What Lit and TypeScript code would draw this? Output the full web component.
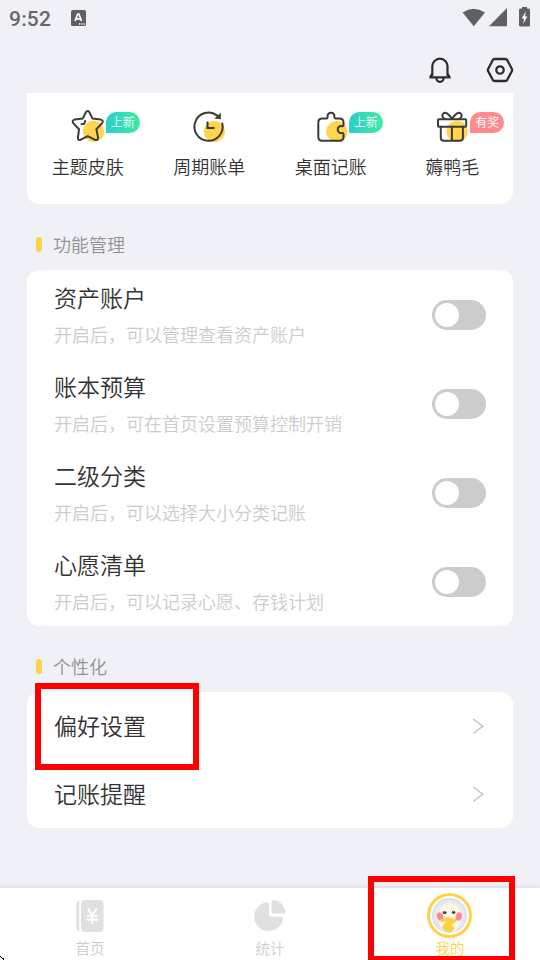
import { LitElement, html, css, svg } from "lit";
import { customElement, property } from "lit/decorators.js";

const FEATURES = [
  { icon: "star", label: "主题皮肤", badge: "上新", tone: "green" },
  { icon: "clock", label: "周期账单", badge: "", tone: "" },
  { icon: "puzzle", label: "桌面记账", badge: "上新", tone: "green" },
  { icon: "gift", label: "薅鸭毛", badge: "有奖", tone: "pink" },
];

const SWITCHES = [
  { title: "资产账户", note: "开启后，可以管理查看资产账户" },
  { title: "账本预算", note: "开启后，可在首页设置预算控制开销" },
  { title: "二级分类", note: "开启后，可以选择大小分类记账" },
  { title: "心愿清单", note: "开启后，可以记录心愿、存钱计划" },
];

const SHAPES: Record<string, unknown> = {
  star: svg`<circle cx="23.6" cy="23.4" r="10.6" fill="#ffd54d"/>
    <path d="M15.7 4.6Q17.7 1.3 19.6 4.6L22.4 10.4L30.6 11.6Q34.3 12.5 31.9 15.4L26.4 21.2L28 29.4Q28.2 33 24.8 31.7L17.7 28.2L10.8 31.7Q7.6 33 8 29.4L9 21.2L3.5 15.4Q1.3 12.5 4.7 11.6L12.9 10.4Z"/>
    <path d="M11.6 16.2l2.6-.4M14.6 14.8l.6-1.8"/>`,
  clock: svg`<circle cx="23.4" cy="23.6" r="10.6" fill="#ffd54d"/>
    <path d="M31.3 15.5A14.1 14.1 0 1 1 26.3 7.6"/>
    <path d="M16.5 13.4V20H23.6" stroke-linecap="butt" stroke-linejoin="miter"/>
    <path d="M29.8 4.8V11.2L23.4 10.4Z" fill="#3b3b3b" stroke="none"/>`,
  puzzle: svg`<circle cx="23.9" cy="23.5" r="10.6" fill="#ffd54d"/>
    <path d="M9.3 10.4H13.4Q14.8 10.3 14.6 8.6C13.8 3.4 22.2 3.4 21.4 8.6Q21.2 10.3 22.6 10.4H26.4Q30.5 10.4 30.5 14.4V17.2Q30.3 18.6 28.7 18.1C23.4 17.6 23.4 25.6 28.7 25Q30.3 24.7 30.5 26.2V29Q30.5 32.8 26.4 32.8H9.3Q5.3 32.8 5.3 29V14.4Q5.3 10.4 9.3 10.4Z"/>`,
  gift: svg`<circle cx="23.1" cy="23.4" r="10.6" fill="#ffd54d"/>
    <rect x="4" y="11.2" width="28.2" height="7.6" rx=".8"/>
    <path d="M6.8 18.8V29.8Q6.8 32.8 9.8 32.8H25.8Q28.9 32.8 28.9 29.8V18.8M17.9 18.8V32.8"/>
    <path d="M18 10.8C14.8 5.8 11.5 3.6 9.3 5.4C7.2 7.2 8.6 9.8 10.6 10.8M18 10.8C21.2 5.8 24.5 3.6 26.7 5.4C28.8 7.2 27.4 9.8 25.4 10.8"/>`,
};

@customElement("feature-item")
export class FeatureItem extends LitElement {
  @property() icon = "star";
  @property() label = "";
  @property() badge = "";
  @property() tone = "";

  static styles = css`
    :host { display: flex; flex: 1; flex-direction: column; align-items: center; padding-top: 15px; }
    .art { position: relative; width: 36px; height: 36px; }
    svg { display: block; fill: none; stroke: #3b3b3b; stroke-width: 2; stroke-linecap: round; stroke-linejoin: round; }
    svg circle { stroke: none; }
    .badge {
      position: absolute; left: 36px; top: 4px; width: 34px; height: 21px;
      border-radius: 11px 11px 11px 0; color: #fff; font-size: 12px; line-height: 20px; text-align: center;
    }
    .green { background: linear-gradient(90deg, #2bcfc9, #3eeaa2); }
    .pink { background: #ff8a8c; }
    .label { margin-top: 9px; font-size: 18px; line-height: 26px; color: #333; white-space: nowrap; }
  `;

  render() {
    return html`
      <div class="art">
        <svg width="36" height="36" viewBox="0 0 36 36">${SHAPES[this.icon]}</svg>
        ${this.badge ? html`<span class="badge ${this.tone}">${this.badge}</span>` : ""}
      </div>
      <div class="label">${this.label}</div>
    `;
  }
}

@customElement("app-root")
export class AppRoot extends LitElement {
  static styles = css`
    :host {
      display: flex; flex-direction: column; position: relative; box-sizing: border-box;
      width: 540px; height: 960px; overflow: hidden; background: #f0f1f6;
      font-family: "Noto Sans CJK SC DemiLight", "Noto Sans CJK SC", sans-serif; font-weight: 350; color: #333;
    }
    svg { display: block; }
    .status { display: flex; align-items: center; height: 38px; padding: 0 9px 2px; box-sizing: border-box; }
    .time { padding-top: 1px; font: 500 21px/38px Roboto, sans-serif; color: #66676a; width: 62px; letter-spacing: .2px; }
    .signals { margin-left: auto; }
    .tools { display: flex; justify-content: flex-end; align-items: center; gap: 35px; height: 55px; padding: 8px 26.5px 0; box-sizing: border-box; }
    .card { margin: 0 27px; background: #fff; border-radius: 12px; }
    .features { display: flex; height: 111px; border-radius: 0 0 12px 12px; }
    .heading { display: flex; align-items: center; gap: 11px; height: 66px; padding: 14px 36px 0; box-sizing: border-box; font-size: 18px; line-height: 26px; color: #929292; }
    .heading::before { content: ""; width: 6px; height: 15px; border-radius: 3px; background: #ffd24b; }
    .row { display: flex; align-items: center; justify-content: space-between; height: 89px; padding: 1px 27px 0; box-sizing: border-box; }
    .title { font-size: 23px; line-height: 34px; }
    .row .title { margin-top: -1px; }
    .note { margin-top: 5px; font-size: 18px; line-height: 30px; color: #ccc; }
    .switch { display: flex; align-items: center; width: 54px; height: 30px; padding: 0 3px; border-radius: 15px; background: #ccc; box-sizing: border-box; }
    .knob { width: 24px; height: 24px; border-radius: 50%; background: #fff; }
    .link { display: flex; align-items: center; justify-content: space-between; height: 68px; padding: 0 28px 0 27px; box-sizing: border-box; }
    .link .title { padding-bottom: 2px; }
    .tabs { display: flex; height: 72px; margin-top: auto; background: #fff; box-shadow: 0 -1px 4px rgba(0, 0, 0, .09); }
    .tab { display: flex; flex: 1; flex-direction: column; align-items: center; justify-content: flex-end; padding-bottom: 1px; box-sizing: border-box; font-size: 14.5px; line-height: 22px; color: #ccc; }
    .tab svg { margin-bottom: 5px; }
    .tab.active { color: #ffd24b; }
    .tab.active svg { margin-bottom: -2px; }
    .mark { position: absolute; box-sizing: border-box; border: 6px solid #f00; }
    .mark-link { left: 35px; top: 683px; width: 164px; height: 87px; }
    .mark-tab { left: 368px; top: 876px; width: 147px; height: 86px; }
    .pointer { position: absolute; left: 0; bottom: 0; }
  `;

  render() {
    return html`
      <div class="status">
        <span class="time">9:52</span>
        <svg width="16" height="18" viewBox="0 0 16 18">
          <rect y="1" width="15" height="16" rx="1.5" fill="#5f6062"/>
          <path d="M4 12L6.7 5h1.2l2.6 7M5.2 9.9h4.2" fill="none" stroke="#fff" stroke-width="1.7"/>
          <path d="M8 15h1.3M10.3 15h1.3M12.6 15h1.3" stroke="#fff" stroke-width="1.3"/>
        </svg>
        <svg class="signals" width="70" height="24" viewBox="0 0 70 24" fill="#5f6062">
          <path d="M1.6 6.4Q12.7-1 24 6.4L12.8 20.2Z"/>
          <path d="M28 20.3L46 2V20.3Z"/>
          <path d="M61 1h5v1.5h1.5q1.5 0 1.5 1.5v15q0 1.5-1.5 1.5h-8q-1.5 0-1.5-1.5V4q0-1.5 1.5-1.5H61Z"/>
          <path d="M64.8 5.5L60.6 12.5h2.5l-1 5.5L66.4 10.6h-2.3Z" fill="#fff"/>
        </svg>
      </div>
      <div class="tools">
        <svg width="22" height="28" viewBox="0 0 22 28" fill="none" stroke="#2c2c2c" stroke-width="2.2" stroke-linejoin="round">
          <path d="M3.3 20V10.3a7.6 7.6 0 0 1 15.2 0V20M1.4 20.8L3.3 17.5M20.4 20.8L18.5 17.5M.4 21.3H21.6M7.4 22.3a3.6 3.6 0 0 0 7.2 0"/>
        </svg>
        <svg width="28" height="28" viewBox="0 0 28 28" fill="none" stroke="#2c2c2c" stroke-width="2.3" stroke-linejoin="round">
          <path d="M8.8 3H19.2Q20.6 3 21.3 4.2L25.8 12.7Q26.4 14 25.8 15.3L21.3 23.8Q20.6 25 19.2 25H8.8Q7.4 25 6.7 23.8L2.2 15.3Q1.6 14 2.2 12.7L6.7 4.2Q7.4 3 8.8 3Z"/>
          <circle cx="14" cy="14" r="3.7"/>
        </svg>
      </div>
      <div class="card features">
        ${FEATURES.map((f) => html`<feature-item .icon=${f.icon} .label=${f.label} .badge=${f.badge} .tone=${f.tone}></feature-item>`)}
      </div>
      <div class="heading">功能管理</div>
      <div class="card">
        ${SWITCHES.map((s) => html`
          <div class="row">
            <div><div class="title">${s.title}</div><div class="note">${s.note}</div></div>
            <div class="switch"><div class="knob"></div></div>
          </div>`)}
      </div>
      <div class="heading">个性化</div>
      <div class="card">
        ${["偏好设置", "记账提醒"].map((t) => html`
          <div class="link">
            <span class="title">${t}</span>
            <svg width="13" height="18" viewBox="0 0 13 18" fill="none" stroke="#c4c4c4" stroke-width="1.5"><path d="M1.3 2L10.8 9.3L1.3 16.5"/></svg>
          </div>`)}
      </div>
      <div class="tabs">
        <div class="tab">
          <svg width="28" height="32" viewBox="0 0 28 32" fill="#e0e0e0">
            <path d="M3.3 .8V31.2Q.3 30.6 .3 27.8V4.2Q.3 1.4 3.3 .8Z"/>
            <rect x="5" width="22.5" height="32" rx="4"/>
            <path d="M11.8 8.5L16.3 15.5L20.8 8.5M16.3 15.5V24M10.8 15.9H21.8M10.8 19.7H21.8" fill="none" stroke="#fff" stroke-width="1.9"/>
          </svg>
          <span>首页</span>
        </div>
        <div class="tab">
          <svg width="32" height="32" viewBox="0 0 32 32" fill="#e0e0e0">
            <path d="M13.3 2.2Q15 2.2 15 4V14.3Q15 16.8 17.5 16.8H27.5Q29.5 16.8 29 19A14.5 14.5 0 1 1 13.3 2.2Z"/>
            <path d="M17.6 2Q17.600 0 19.600 0A13.500 13.500 0 0 1 31.400 11.500Q31.600 13.500 29.600 13.500H19.600Q17.600 13.500 17.600 11.500Z"/>
          </svg>
          <span>统计</span>
        </div>
        <div class="tab active">
          <svg width="46" height="46" viewBox="0 0 46 46">
            <circle cx="22.5" cy="22.5" r="21" fill="#fff" stroke="#ffd24b" stroke-width="3"/>
            <circle cx="22.5" cy="22.5" r="16.8" fill="#e7e8f4" stroke="#dadcdf" stroke-width="1.2"/>
            <path d="M12 23Q12 15 15.5 12.5Q18 10.3 21.5 10.3L22.5 8L24 10.5Q30 11 32.5 17Q34 23 33.5 27Q32 35 27 38.5H17.5Q12 35 12 23Z" fill="#fdf7e3"/>
            <ellipse cx="13" cy="23.5" rx="3" ry="4" fill="#ff858b" transform="rotate(-20 13 23.5)"/>
            <ellipse cx="31.8" cy="23.5" rx="2.9" ry="4.2" fill="#ff858b" transform="rotate(15 31.8 23.5)"/>
            <path d="M11.2 27L16 26L21 24.3L24 25.5L28.5 25.5L30 28L25 31.5L27.5 35.5L24.5 38.8H18.5L14.8 34.5L17 31.5Z" fill="#fbd044"/>
            <path d="M11.5 28.2L15 29L20 27.8L16.5 31.5L15.5 33L13.5 32Z" fill="#fdf3d0"/>
            <ellipse cx="17.6" cy="19.5" rx="2" ry="1.6" fill="#403f42"/><ellipse cx="26.6" cy="19.3" rx="1.7" ry="1.6" fill="#403f42"/>
            <circle cx="17.8" cy="18.7" r=".5" fill="#fff"/><circle cx="26.4" cy="18.5" r=".4" fill="#fff"/>
          </svg>
          <span>我的</span>
        </div>
      </div>
      <div class="mark mark-link"></div>
      <div class="mark mark-tab"></div>
      <svg class="pointer" width="5" height="5" viewBox="0 0 5 5" fill="#000" shape-rendering="crispEdges">
        <path d="M0 1h1v1h-1zM1 2h1v1h-1zM3 3h1v1h-1zM2 3h1v1h-1zM3 4h1v1h-1z"/>
      </svg>
    `;
  }
}
